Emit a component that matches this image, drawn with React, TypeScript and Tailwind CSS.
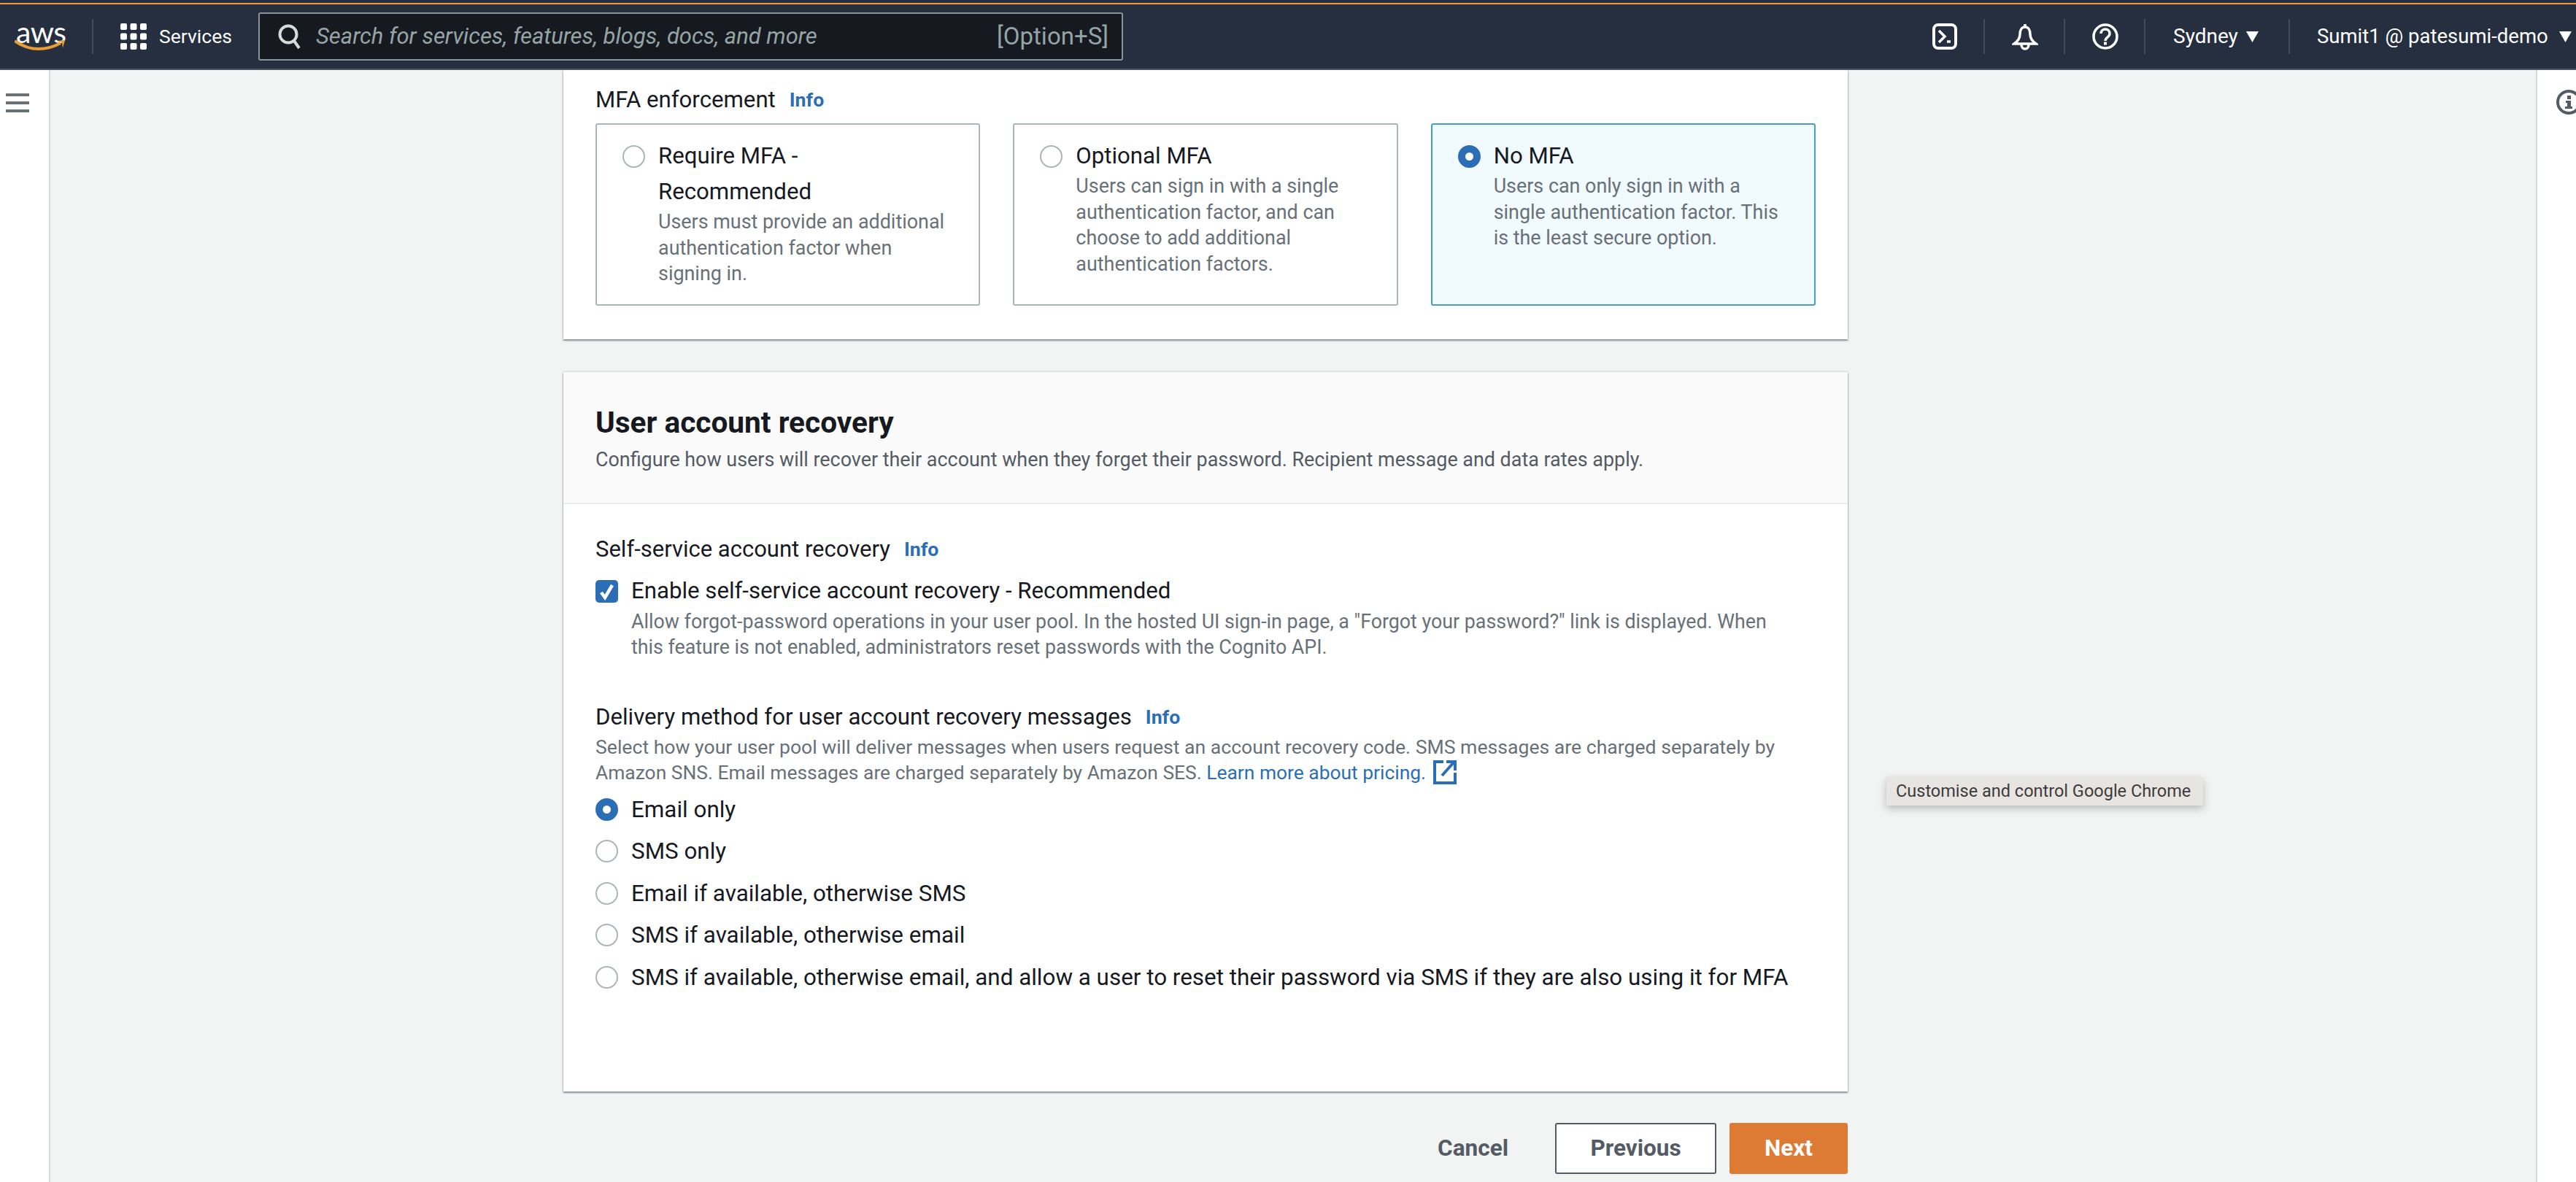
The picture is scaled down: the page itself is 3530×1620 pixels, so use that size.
import type { ReactNode } from "react";

const font = "font-['Roboto',sans-serif]";

const Radio = ({ on = false }: { on?: boolean }) => (
  <span
    className={
      on
        ? "block w-[31px] h-[31px] shrink-0 rounded-full bg-white border-[10px] border-[#2b6eb5]"
        : "block w-[31px] h-[31px] shrink-0 rounded-full bg-white border-2 border-[#aab7b8]"
    }
  />
);

const Info = () => (
  <a className="ml-[19px] text-[26.7px] font-bold text-[#2b6eb5]">Info</a>
);

const Caret = () => (
  <svg width="17" height="15" viewBox="0 0 17 15" className="shrink-0">
    <path d="M0 0h17L8.5 15z" fill="#fff" />
  </svg>
);

const Tile = ({
  title,
  desc,
  on = false,
}: {
  title: ReactNode;
  desc: ReactNode;
  on?: boolean;
}) => (
  <div
    className={
      on
        ? "flex h-[250px] rounded-[3px] border-2 border-[#44a0cb] bg-[#f1faff] pl-[35px] pt-[28px] gap-[18px]"
        : "flex h-[250px] rounded-[3px] border-2 border-[#aab7b8] bg-white pl-[35px] pt-[28px] gap-[18px]"
    }
  >
    <Radio on={on} />
    <div className="-mt-[10px] pr-[30px]">
      <div className="text-[31.2px] leading-[49px] text-[#16191f]">{title}</div>
      <div className="text-[26.9px] leading-[35.5px] text-[#687078]">{desc}</div>
    </div>
  </div>
);

const options = [
  "Email only",
  "SMS only",
  "Email if available, otherwise SMS",
  "SMS if available, otherwise email",
  "SMS if available, otherwise email, and allow a user to reset their password via SMS if they are also using it for MFA",
];

export default function App() {
  return (
    <div className={`${font} relative w-[3530px] h-[1620px] overflow-hidden bg-[#f2f3f3] flex flex-col`}>
      <div className="h-[4px] bg-[#232f3e]" />
      <div className="h-[2px] bg-[#ec9c32]" />
      <header className="h-[90px] shrink-0 bg-[#252f3f] border-b-2 border-[#4b5563] flex items-center pl-[20px] pr-[6px] text-white">
        <div className="relative w-[68px] h-[48px] shrink-0">
          <span className="absolute left-[2px] -top-[5px] text-[41px] leading-[46px] tracking-[-0.5px] font-['Lato',sans-serif] text-white">
            aws
          </span>
          <svg width="70" height="18" viewBox="0 0 70 18" className="absolute left-0 top-[29px]">
            <path d="M0 1c10 7 21 11 33 11 11 0 21-3 30-8" fill="none" stroke="#ec9c32" strokeWidth="4" />
            <path d="M57 1l12-1-3 11-1-8z" fill="#ec9c32" />
          </svg>
        </div>
        <div className="ml-[38px] w-[2px] h-[48px] bg-[#414d5c] shrink-0" />
        <svg width="36" height="36" viewBox="0 0 36 36" className="ml-[37px] shrink-0">
          {[0, 13.5, 27].map((y) =>
            [0, 13.5, 27].map((x) => (
              <rect key={`${x}-${y}`} x={x} y={y} width="9" height="9" rx="2" fill="#fff" />
            ))
          )}
        </svg>
        <span className="ml-[17px] text-[26.5px] w-[97px] whitespace-nowrap">Services</span>
        <div className="ml-[39px] w-[1185px] h-[66px] rounded-[3px] border-2 border-[#879596] bg-[#16191f] flex items-center pl-[24px] pr-[18px]">
          <svg width="34" height="36" viewBox="0 0 34 36" className="shrink-0">
            <circle cx="15" cy="15" r="11.5" fill="none" stroke="#d5dbdb" strokeWidth="4" />
            <path d="M23 24l7 10" stroke="#d5dbdb" strokeWidth="4" />
          </svg>
          <span className="ml-[19px] text-[31px] italic text-[#95a5a6] whitespace-nowrap">
            Search for services, features, blogs, docs, and more
          </span>
          <span className="ml-auto text-[33px] text-[#95a5a6] whitespace-nowrap">[Option+S]</span>
        </div>
        <svg width="34" height="36" viewBox="0 0 34 36" className="ml-auto shrink-0">
          <rect x="2" y="2" width="30" height="32" rx="6" fill="none" stroke="#fff" strokeWidth="4" />
          <path d="M9 10l8 8-8 8" fill="none" stroke="#fff" strokeWidth="3.5" />
          <path d="M20 25h5" stroke="#fff" strokeWidth="3.5" />
        </svg>
        <div className="ml-[36px] w-[2px] h-[48px] bg-[#414d5c] shrink-0" />
        <svg width="36" height="38" viewBox="0 0 36 38" className="ml-[37px] shrink-0">
          <path
            d="M18 2v4M18 6c-5 0-7 5-7 10 0 5-2 9-8 13h30c-6-4-8-8-8-13 0-5-2-10-7-10z"
            fill="none"
            stroke="#fff"
            strokeWidth="3.5"
          />
          <path d="M13 30c0 8 10 8 10 0" fill="none" stroke="#fff" strokeWidth="3.5" />
        </svg>
        <div className="ml-[35px] w-[2px] h-[48px] bg-[#414d5c] shrink-0" />
        <svg width="36" height="36" viewBox="0 0 36 36" className="ml-[37px] shrink-0">
          <circle cx="18" cy="18" r="16" fill="none" stroke="#fff" strokeWidth="3.5" />
          <path d="M12 14c0-8 12-8 12 0 0 5-6 5-6 10" fill="none" stroke="#fff" strokeWidth="3.5" />
          <rect x="16" y="25.5" width="4" height="4" fill="#fff" />
        </svg>
        <div className="ml-[35px] w-[2px] h-[48px] bg-[#414d5c] shrink-0" />
        <span className="ml-[38px] w-[86px] text-[28px] whitespace-nowrap">Sydney</span>
        <span className="ml-[14px] flex">
          <Caret />
        </span>
        <div className="ml-[41px] w-[2px] h-[48px] bg-[#414d5c] shrink-0" />
        <span className="ml-[37px] w-[315px] text-[27.5px] whitespace-nowrap">Sumit1 @ patesumi-demo</span>
        <span className="ml-[17px] flex">
          <Caret />
        </span>
      </header>

      <div className="flex flex-1 min-h-0">
        <aside className="w-[69px] shrink-0 bg-white border-r-2 border-[#d5dbdb] pl-[8px] pt-[32px] flex flex-col gap-[7px]">
          <span className="block w-[32px] h-[4px] bg-[#687078]" />
          <span className="block w-[32px] h-[4px] bg-[#687078]" />
          <span className="block w-[32px] h-[4px] bg-[#687078]" />
        </aside>

        <main className="flex-1 pl-[703px] overflow-hidden">
          <div className="w-[1760px]">
            <section className="bg-white shadow-[0_2px_2px_rgba(0,28,36,0.4),0_0_3px_rgba(0,28,36,0.25)] px-[44px] pt-[17px] pb-[46px]">
              <div className="flex items-center h-[49px] text-[31.2px] text-[#16191f]">
                MFA enforcement
                <Info />
              </div>
              <div className="mt-[7px] grid grid-cols-3 gap-[45px]">
                <Tile
                  title={
                    <>
                      Require MFA -<br />
                      Recommended
                    </>
                  }
                  desc="Users must provide an additional authentication factor when signing in."
                />
                <Tile
                  title="Optional MFA"
                  desc="Users can sign in with a single authentication factor, and can choose to add additional authentication factors."
                />
                <Tile
                  on
                  title="No MFA"
                  desc="Users can only sign in with a single authentication factor. This is the least secure option."
                />
              </div>
            </section>

            <section className="mt-[45px] bg-white shadow-[0_2px_2px_rgba(0,28,36,0.4),0_0_3px_rgba(0,28,36,0.25)]">
              <div className="bg-[#fafafa] border-b-2 border-[#eaeded] px-[44px] pt-[44px] pb-[41px]">
                <h2 className="text-[40.6px] leading-[50px] font-bold text-[#16191f]">User account recovery</h2>
                <p className="mt-[8px] text-[26.9px] leading-[36px] text-[#545b64]">
                  Configure how users will recover their account when they forget their password. Recipient message and
                  data rates apply.
                </p>
              </div>
              <div className="px-[44px] pt-[38px] pb-[132px]">
                <div className="flex items-center h-[49px] text-[31px] text-[#16191f]">
                  Self-service account recovery
                  <Info />
                </div>
                <div className="mt-[8px] flex items-center h-[49px] gap-[18px] text-[31.2px] text-[#16191f]">
                  <span className="w-[31px] h-[31px] shrink-0 rounded-[5px] bg-[#2b6eb5] flex items-center justify-center">
                    <svg width="21" height="24" viewBox="0 0 21 24">
                      <path d="M3 13l5 7L18 3" fill="none" stroke="#fff" strokeWidth="4.5" />
                    </svg>
                  </span>
                  Enable self-service account recovery - Recommended
                </div>
                <p className="ml-[49px] text-[26.8px] leading-[35px] text-[#687078]">
                  Allow forgot-password operations in your user pool. In the hosted UI sign-in page, a "Forgot your
                  password?" link is displayed. When
                  <br />
                  this feature is not enabled, administrators reset passwords with the Cognito API.
                </p>
                <div className="mt-[55px] flex items-center h-[46px] text-[31.2px] text-[#16191f]">
                  Delivery method for user account recovery messages
                  <Info />
                </div>
                <p className="text-[26.6px] leading-[35px] text-[#687078]">
                  Select how your user pool will deliver messages when users request an account recovery code. SMS
                  messages are charged separately by
                  <br />
                  <span className="text-[26.4px]">
                    Amazon SNS. Email messages are charged separately by Amazon SES.{" "}
                    <a className="text-[#2b6eb5]">
                      Learn more about pricing.
                      <svg width="32" height="34" viewBox="0 0 32 34" className="inline-block ml-[10px] align-[-7px]">
                        <path d="M14 3H2v29h28V18" fill="none" stroke="#2b6eb5" strokeWidth="4" />
                        <path d="M12 22L28 4M18 3h12v12" fill="none" stroke="#2b6eb5" strokeWidth="4" />
                      </svg>
                    </a>
                  </span>
                </p>
                <div className="mt-[8px] flex flex-col gap-[8.4px]">
                  {options.map((label, i) => (
                    <label key={label} className="flex items-center h-[49px] gap-[18px] text-[31.4px] text-[#16191f]">
                      <Radio on={i === 0} />
                      {label}
                    </label>
                  ))}
                </div>
              </div>
            </section>

            <div className="mt-[43px] flex justify-end items-center text-[31.5px] font-bold">
              <span className="text-[#545b64]">Cancel</span>
              <span className="ml-[64px] w-[221px] h-[70px] rounded-[3px] border-2 border-[#545b64] bg-white text-[#545b64] flex items-center justify-center">
                Previous
              </span>
              <span className="ml-[18px] w-[162px] h-[70px] rounded-[3px] bg-[#dd7a33] text-white flex items-center justify-center">
                Next
              </span>
            </div>
          </div>
        </main>

        <aside className="w-[55px] shrink-0 bg-white border-l-2 border-[#d5dbdb] overflow-hidden pl-[26px] pt-[27px]">
          <svg width="34" height="34" viewBox="0 0 34 34" className="shrink-0 overflow-visible">
            <circle cx="17" cy="17" r="15" fill="none" stroke="#545b64" strokeWidth="4" />
            <rect x="15" y="8" width="5" height="5" fill="#545b64" />
            <path d="M13 15h7v8h2v3H12v-3h3v-5h-2z" fill="#545b64" />
          </svg>
        </aside>
      </div>

      <div className="absolute left-[2585px] top-[1065px] w-[434px] h-[39px] bg-[#e8e4e1] rounded-[2px] shadow-[0_4px_12px_rgba(0,0,0,0.25)] pl-[13px] flex items-center text-[23.5px] text-[#3c3c3c] whitespace-nowrap">
        Customise and control Google Chrome
      </div>
    </div>
  );
}
